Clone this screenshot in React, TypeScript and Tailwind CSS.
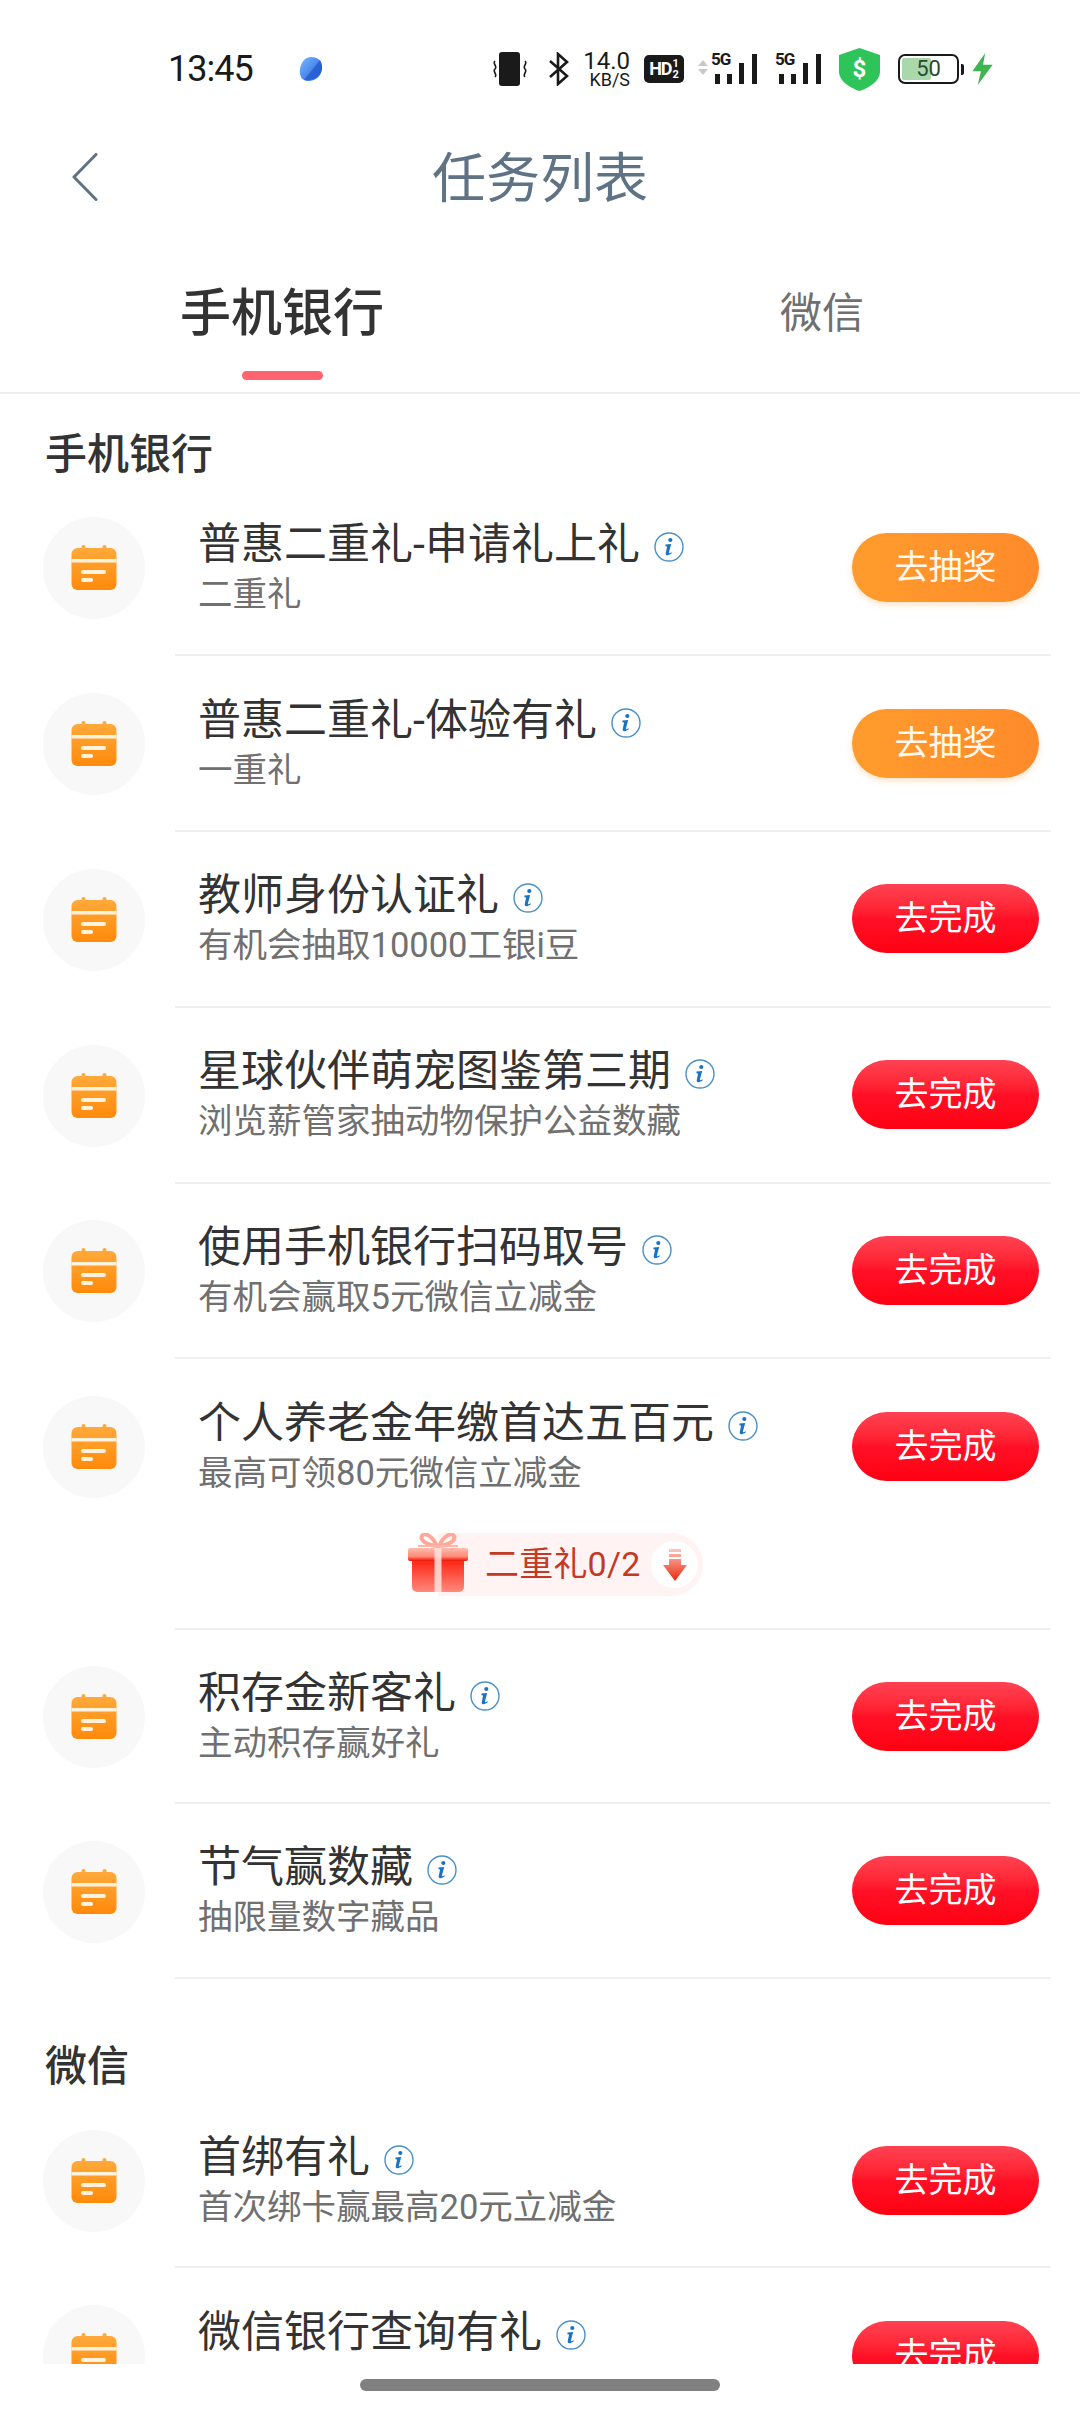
import React from "react";

const FONT = { fontFamily: '"Roboto","Noto Sans CJK SC",sans-serif' };

function Calendar() {
  return (
    <svg width="46" height="46" viewBox="0 0 46 46">
      <defs>
        <linearGradient id="cal" x1="0" y1="0" x2="0" y2="1">
          <stop offset="0" stopColor="#ffa93a" />
          <stop offset="1" stopColor="#ff8a0a" />
        </linearGradient>
      </defs>
      <rect x="10.5" y="0" width="4" height="8" rx="2" fill="#ffa93a" />
      <rect x="31.5" y="0" width="4" height="8" rx="2" fill="#ffa93a" />
      <rect x="0.5" y="3" width="45" height="42" rx="6" fill="url(#cal)" />
      <rect x="0.5" y="14" width="45" height="3.5" fill="#fff3e0" />
      <rect x="10" y="25" width="25" height="4" rx="2" fill="#fff3e0" />
      <rect x="10" y="33" width="12" height="4" rx="2" fill="#fff3e0" />
    </svg>
  );
}

function Info() {
  return (
    <svg width="30" height="30" viewBox="0 0 30 30" className="shrink-0">
      <circle cx="15" cy="15" r="14" fill="none" stroke="#4a90c8" strokeWidth="1.4" />
      <circle cx="16.3" cy="8" r="2.1" fill="#1a73c4" />
      <path d="M11.5 12.6 L17.2 12 L14.9 20.5 C14.7 21.5 15.4 21.7 17.4 20.2 L17.9 21 C15.5 23.4 11.5 24.4 11.7 21.2 L13.1 14.6 L11.4 14.2 Z" fill="#1a73c4" />
    </svg>
  );
}

function Row({
  title,
  sub,
  btn,
  gift,
  height = "h-[173.75px]",
}: {
  title: string;
  sub: string;
  btn: "draw" | "done";
  gift?: boolean;
  height?: string;
}) {
  return (
    <div>
      <div className={`flex ${height} items-center pl-[43px] pr-[41px]`}>
        <div className="mt-[2px] flex h-[102px] w-[102px] shrink-0 items-center justify-center rounded-full bg-[#f8f8f8]">
          <Calendar />
        </div>
        <div className="ml-[53px] flex flex-1 flex-col">
          <div className="mb-[-4px] mt-[3px] flex h-[54px] items-center text-[43px] leading-[54px] text-[#333333]">
            <span className="whitespace-nowrap">{title}</span>
            <span className="ml-[14px] translate-y-[3px]"><Info /></span>
          </div>
          <div className="h-[54px] whitespace-nowrap text-[34.5px] leading-[54px] text-[#707070]">{sub}</div>
        </div>
        <div
          className={
            btn === "draw"
              ? "flex h-[69px] w-[187px] items-center justify-center rounded-full bg-gradient-to-r from-[#ff9c2e] to-[#ff8a2a] text-[34px] text-[#fff8ee] shadow-[0_3px_6px_rgba(255,150,50,0.25)]"
              : "flex h-[69px] w-[187px] items-center justify-center rounded-full bg-gradient-to-b from-[#ff4152] via-[#ff1026] to-[#ff0010] text-[34px] text-white"
          }
        >
          {btn === "draw" ? "去抽奖" : "去完成"}
        </div>
      </div>
      {gift && (
        <div className="flex h-[95.25px] items-start pl-[408px]">
          <Gift />
          <div className="ml-[-30px] flex h-[63px] items-center rounded-r-full bg-[#fff4f3] pl-[47px] pr-[5px] text-[34px] text-[#c23a25]">
            <span className="whitespace-nowrap tracking-[0.2px]">二重礼0/2</span>
            <div className="ml-[11px] flex h-[47px] w-[47px] items-center justify-center rounded-full bg-white">
              <svg width="24" height="32" viewBox="0 0 24 32">
                <defs>
                  <linearGradient id="arrow" x1="0" y1="0" x2="0" y2="1">
                    <stop offset="0" stopColor="#ffc8ba" />
                    <stop offset="1" stopColor="#e8260c" />
                  </linearGradient>
                </defs>
                <path d="M6 0h12v3H6zM6 5h12v3H6zM6 10h12v6h6L12 32 0 16h6z" fill="url(#arrow)" />
              </svg>
            </div>
          </div>
        </div>
      )}
      <div className="ml-[175px] mr-[29px] h-[2px] bg-[#f0f0f0]" />
    </div>
  );
}

function Gift() {
  return (
    <svg width="60" height="60" viewBox="0 0 60 60" className="relative z-10 shrink-0">
      <defs>
        <linearGradient id="lid" x1="0" y1="0" x2="0" y2="1">
          <stop offset="0" stopColor="#ffbcae" />
          <stop offset="0.65" stopColor="#ff8a78" />
          <stop offset="1" stopColor="#f01000" />
        </linearGradient>
        <linearGradient id="box" x1="0" y1="0" x2="0" y2="1">
          <stop offset="0" stopColor="#ff2010" />
          <stop offset="1" stopColor="#ff8a7c" />
        </linearGradient>
      </defs>
      <path d="M29 13C24 2 16-1 14 3c-2 4 4 9 15 10zM31 13C36 2 44-1 46 3c2 4-4 9-15 10z" fill="none" stroke="#ffa89a" strokeWidth="4" />
      <path d="M10 13h40" stroke="#ffb5a8" strokeWidth="2" />
      <path d="M4 26h52v28a5 5 0 0 1-5 5H9a5 5 0 0 1-5-5z" fill="url(#box)" />
      <rect x="0" y="15" width="60" height="13" rx="2" fill="url(#lid)" />
      <rect x="26.5" y="15" width="7" height="44" fill="#ffe3de" opacity="0.85" />
    </svg>
  );
}

function Signal() {
  return (
    <div className="relative h-[30px] w-[42px]">
      <svg width="42" height="30" viewBox="0 0 42 30">
        <rect x="0" y="20" width="5" height="10" fill="#1a1a1a" />
        <rect x="12" y="20" width="5" height="10" fill="#1a1a1a" />
        <rect x="24" y="9" width="5" height="21" fill="#1a1a1a" />
        <rect x="37" y="0" width="5" height="30" fill="#1a1a1a" />
      </svg>
      <span className="absolute left-[-4px] top-[-3px] text-[17px] font-bold leading-[17px] tracking-[-1px] text-[#1a1a1a]">5G</span>
    </div>
  );
}

function StatusBar() {
  return (
    <div className="flex h-[138px] items-center pl-[168px] text-[#1a1a1a]">
      <span className="w-[84px] whitespace-nowrap text-[36px] leading-none tracking-[-1px]">13:45</span>
      <svg width="26" height="26" viewBox="0 0 26 26" className="ml-[46px]">
        <defs>
          <linearGradient id="app" x1="0" y1="0" x2="1" y2="1">
            <stop offset="0" stopColor="#7fb8ff" />
            <stop offset="1" stopColor="#1a5fe0" />
          </linearGradient>
        </defs>
        <path d="M13 1 C20 1 25 5 24 13 C23 21 17 25 10 25 C4 25 1 20 2 13 C3 6 7 1 13 1Z" fill="url(#app)" />
        <path d="M22 4 L6 24 C14 25 23 20 24 13 C24 9 23 6 22 4Z" fill="#1f55c8" opacity="0.7" />
      </svg>
      <svg width="36" height="34" viewBox="0 0 36 34" className="ml-[168px]">
        <rect x="7" y="0" width="21" height="34" rx="3" fill="#1a1a1a" />
        <path d="M3 9c-3 3 3 5 0 8s3 5 0 8M33 9c3 3-3 5 0 8s-3 5 0 8" fill="none" stroke="#1a1a1a" strokeWidth="1.6" />
      </svg>
      <svg width="21" height="34" viewBox="0 0 21 34" className="ml-[20px]">
        <path d="M2 9 L19 24 L10 32 V2 L19 10 L2 25" fill="none" stroke="#1a1a1a" strokeWidth="2.6" />
      </svg>
      <div className="ml-[14px] flex w-[47px] flex-col items-end">
        <span className="text-[24px] leading-[20px]">14.0</span>
        <span className="mt-[2px] text-[18px] leading-[14px]">KB/S</span>
      </div>
      <div className="ml-[14px] flex h-[28px] w-[40px] items-center justify-center rounded-[5px] bg-[#1a1a1a] text-white">
        <span className="text-[18px] font-bold leading-none tracking-[-1px]">HD</span>
        <span className="ml-[1px] flex flex-col text-[11px] font-bold leading-[11px]"><span>1</span><span>2</span></span>
      </div>
      <div className="ml-[14px] mt-[-4px] flex flex-col gap-[3px]">
        <div className="h-0 w-0 border-x-[5px] border-b-[6px] border-x-transparent border-b-[#c8c8c8]" />
        <div className="h-0 w-0 border-x-[5px] border-t-[6px] border-x-transparent border-t-[#c8c8c8]" />
      </div>
      <div className="ml-[7px]"><Signal /></div>
      <div className="ml-[22px]"><Signal /></div>
      <div className="relative ml-[18px] flex h-[43px] w-[41px] items-center justify-center">
        <svg width="41" height="43" viewBox="0 0 41 43" className="absolute left-0 top-0">
          <path d="M20.5 0 L41 7 V24 C41 33 30 40 20.5 43 C11 40 0 33 0 24 V7 Z" fill="#2fc45a" />
        </svg>
        <span className="relative text-[24px] font-bold leading-none text-white">$</span>
      </div>
      <div className="relative ml-[18px] flex h-[30px] w-[61px] items-center justify-center overflow-hidden rounded-[7px] border-2 border-[#1a1a1a]">
        <div className="absolute bottom-[2px] left-[2px] top-[2px] w-[29px] rounded-[2px] bg-[#a9d9ab]" />
        <span className="relative text-[22px] leading-none text-[#2d4a30]">50</span>
      </div>
      <div className="ml-[2px] h-[11px] w-[3px] rounded-r-[2px] bg-[#1a1a1a]" />
      <svg width="22" height="32" viewBox="0 0 20 30" className="ml-[7px]">
        <path d="M13 0 L1 17 H9 L6 30 L20 11 H11 Z" fill="#3fb552" />
      </svg>
    </div>
  );
}

function Heading({ children }: { children: string }) {
  return <div className="pl-[45px] text-[42px] font-medium leading-[54px] text-[#333333]">{children}</div>;
}

export default function App() {
  return (
    <div className="flex h-[2412px] w-[1080px] flex-col overflow-hidden bg-white" style={FONT}>
      <StatusBar />
      <div className="flex h-[78px] items-center pl-[72px]">
        <svg width="26" height="48" viewBox="0 0 26 48" className="shrink-0">
          <path d="M24 1.5 L2 24 L24 46.5" fill="none" stroke="#5f7384" strokeWidth="3" strokeLinecap="round" strokeLinejoin="round" />
        </svg>
        <div className="ml-[334px] mt-[6px] text-[54px] leading-none text-[#5f7384]">任务列表</div>
      </div>
      <div className="flex h-[178px] border-b-2 border-[#eeeeee]">
        <div className="ml-[180px] flex w-[204px] flex-col items-center pt-[67px]">
          <div className="whitespace-nowrap text-[51px] font-medium leading-[62px] text-[#333333]">手机银行</div>
          <div className="mt-[26px] h-[9px] w-[81px] rounded-full bg-[#ff6370]" />
        </div>
        <div className="ml-[396px] pt-[71px] text-[42px] leading-[54px] text-[#707070]">微信</div>
      </div>
      <div className="h-[1970px] overflow-hidden">
        <div className="pt-[34px]" />
        <Heading>手机银行</Heading>
        <div className="mt-[-1.5px]">
          <Row title="普惠二重礼-申请礼上礼" sub="二重礼" btn="draw" />
          <Row title="普惠二重礼-体验有礼" sub="一重礼" btn="draw" />
          <Row title="教师身份认证礼" sub="有机会抽取10000工银i豆" btn="done" />
          <Row title="星球伙伴萌宠图鉴第三期" sub="浏览薪管家抽动物保护公益数藏" btn="done" />
          <Row title="使用手机银行扫码取号" sub="有机会赢取5元微信立减金" btn="done" />
          <Row title="个人养老金年缴首达五百元" sub="最高可领80元微信立减金" btn="done" gift />
          <Row title="积存金新客礼" sub="主动积存赢好礼" btn="done" height="h-[172px]" />
          <Row title="节气赢数藏" sub="抽限量数字藏品" btn="done" height="h-[173px]" />
        </div>
        <div className="pt-[61px]" />
        <Heading>微信</Heading>
        <Row title="首绑有礼" sub="首次绑卡赢最高20元立减金" btn="done" height="h-[172px]" />
        <Row title="微信银行查询有礼" sub="" btn="done" />
      </div>
      <div className="flex flex-1 justify-center pt-[15px]">
        <div className="h-[12px] w-[360px] rounded-full bg-[#808080]" />
      </div>
    </div>
  );
}
